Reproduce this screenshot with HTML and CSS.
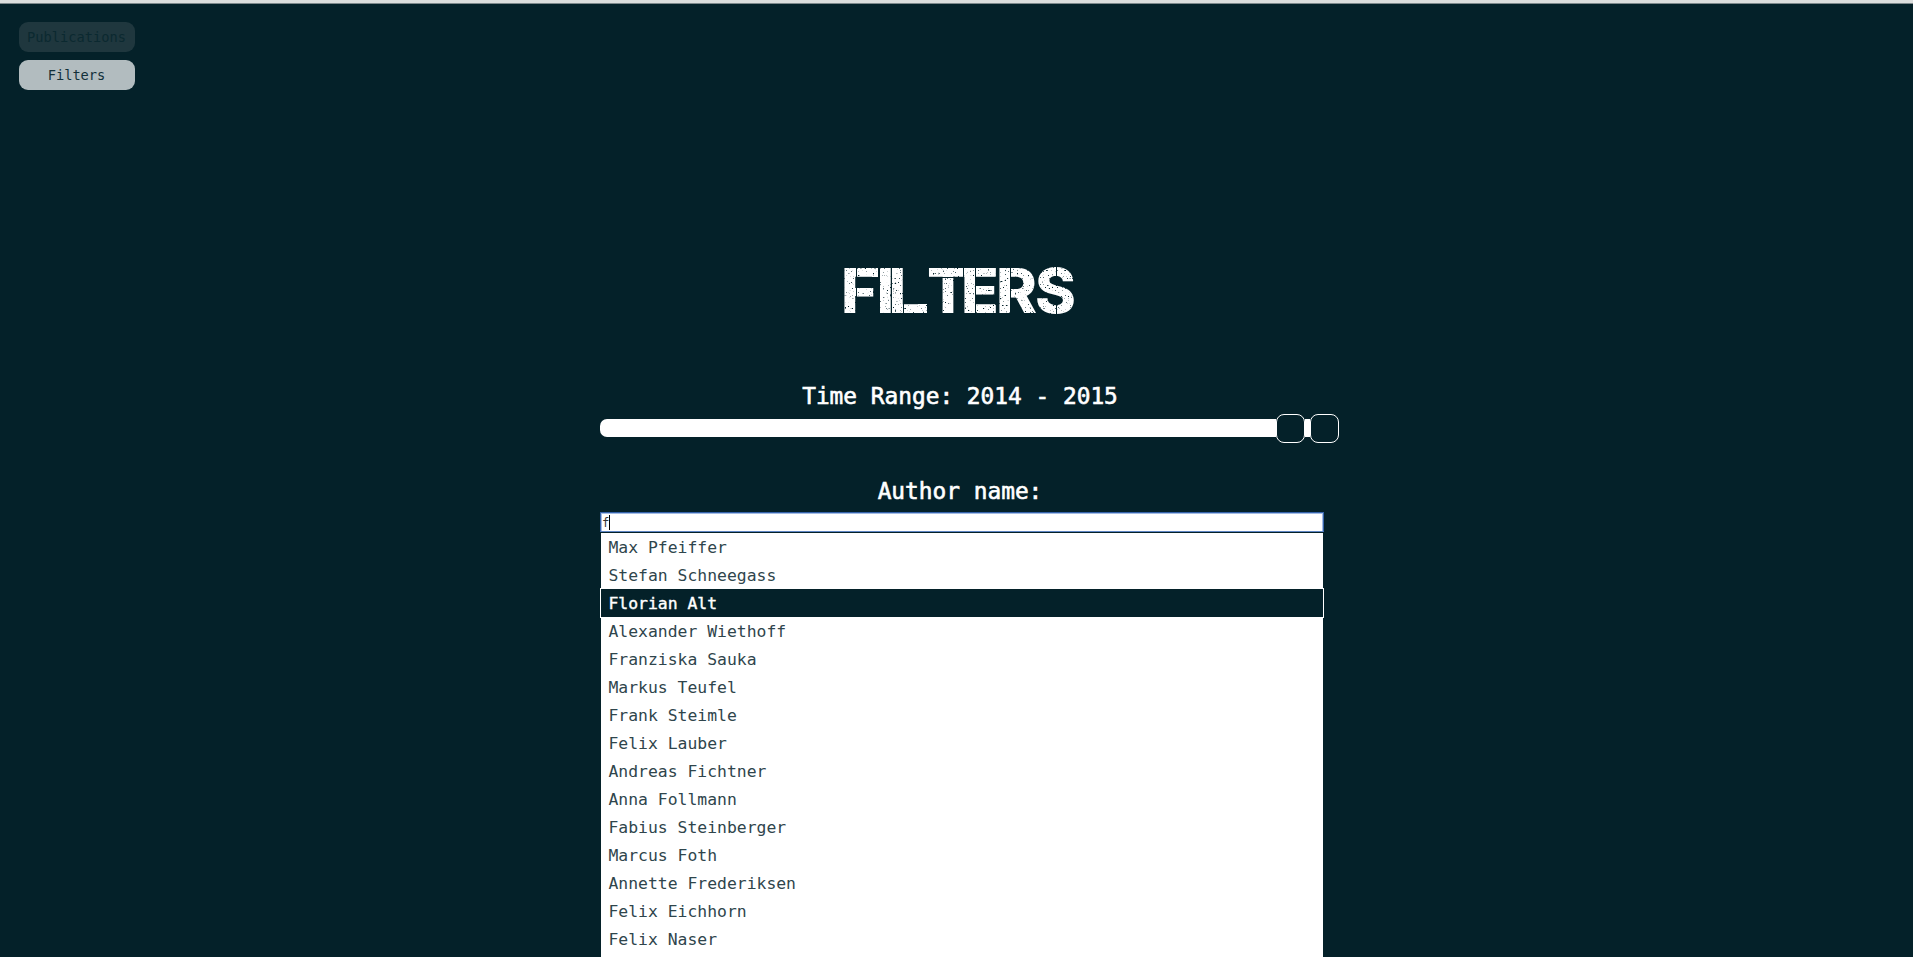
FILE: index.html
```html
<!DOCTYPE html>
<html lang="en">
<head>
<meta charset="utf-8">
<title>Filters</title>
<link rel="stylesheet" href="styles.css">
</head>
<body>
<nav class="menu">
  <button class="menu-item muted">Publications</button>
  <button class="menu-item">Filters</button>
</nav>
<main class="filters">
  <svg class="title" width="260" height="90" viewBox="828 245 260 90" role="heading" aria-level="1">
    <defs>
      <filter id="worn" x="0" y="0" width="1" height="1">
        <feTurbulence type="fractalNoise" baseFrequency="0.6" numOctaves="2" seed="8" result="n"/>
        <feColorMatrix in="n" type="matrix" values="0 0 0 0 0  0 0 0 0 0  0 0 0 0 0  8 0 0 0 -5.3" result="spots"/>
        <feComposite in="SourceGraphic" in2="spots" operator="out"/>
      </filter>
    </defs>
    <g filter="url(#worn)">
      <text class="title-text" y="313" x="841 876.5 888.5 927 961 996 1035">FILTERS</text>
      <path class="worn-edge" d="M918 304h9v9h-9zM872 268h6v9h-6z"/>
    </g>
    <path class="slits" d="M856.5 266v49M891.5 266v49M903.5 303v12M963.5 266v49M975.5 266v49M1010.5 266v49M1056.5 266v14M1056.5 303v12M938 277.5h16"/>
  </svg>
  <h2 class="label">Time Range: 2014 - 2015</h2>
  <div class="slider"><div class="track"></div><i class="handle"></i><i class="joint"></i><i class="handle"></i></div>
  <h2 class="label author">Author name:</h2>
  <div class="field" role="textbox">f<i class="caret"></i></div>
  <ul class="options">
    <li>Max Pfeiffer</li>
    <li>Stefan Schneegass</li>
    <li class="active">Florian Alt</li>
    <li>Alexander Wiethoff</li>
    <li>Franziska Sauka</li>
    <li>Markus Teufel</li>
    <li>Frank Steimle</li>
    <li>Felix Lauber</li>
    <li>Andreas Fichtner</li>
    <li>Anna Follmann</li>
    <li>Fabius Steinberger</li>
    <li>Marcus Foth</li>
    <li>Annette Frederiksen</li>
    <li>Felix Eichhorn</li>
    <li>Felix Naser</li>
  </ul>
</main>
</body>
</html>
```
FILE: styles.css
```css
* { box-sizing: border-box; }
html { height: 100%; overflow: hidden; }
body {
  height: 957px;
  margin: 0;
  overflow: hidden;
  background: #042129;
  border-top: 3px solid #dcdedd;
  box-shadow: inset 0 1px #7d888b;
  color: #fff;
  font-family: Consolas, "DejaVu Sans Mono", monospace;
}
.menu {
  display: flex;
  flex-direction: column;
  gap: 8px;
  width: 116px;
  height: 71px;
  margin: 19px 0 0 19px;
}
.menu-item {
  height: 30px;
  padding: 0 1px 0 0;
  border: 0;
  border-radius: 9px;
  background: #b2bcbf;
  color: #12303a;
  font: 13.7px/30px Consolas, "DejaVu Sans Mono", monospace;
}
.menu-item.muted { background: #1f373e; color: #0b2930; }
.filters { width: 724px; margin: 152px 0 0 600px; }
.title { display: block; margin-left: 228px; }
.title-text { font: 800 62px Inter, sans-serif; fill: #fff; }
.worn-edge { fill: #fff; }
.slits { fill: none; stroke: #042129; stroke-width: 1; }
.label {
  height: 32px;
  margin: 45px 0 0;
  padding-right: 8px;
  text-indent: 4px;
  text-align: center;
  font-size: 22.8px;
  line-height: 32px;
  font-weight: 400;
  white-space: nowrap;
  -webkit-text-stroke: .6px #fff;
}
.slider { display: flex; align-items: center; width: 740px; height: 30px; margin-top: 1px; }
.track {
  width: 676px;
  flex: none;
  height: 18px;
  border-radius: 7px 0 0 7px;
  background: #fff;
}
.joint { width: 5px; height: 18px; flex: none; background: #fff; }
.handle {
  width: 29px;
  height: 29px;
  flex: none;
  border: 1px solid #fff;
  border-radius: 8px;
  background: #042129;
}
.author { margin-top: 32px; }
.field {
  display: flex;
  align-items: center;
  height: 20px;
  margin-top: 5px;
  padding: 1px 0 0 1px;
  border: 1px solid #3563aa;
  border-bottom-color: #5f86c4;
  box-shadow: inset 0 1px #a3bce4, inset 1px 0 #a3bce4, inset -1px 0 #a3bce4;
  background: #fff;
  color: #333;
  font-size: 12.2px;
  line-height: 18px;
}
.caret { width: 1px; height: 15px; background: #000; }
.options {
  margin: 1px 1px 0;
  padding: 0 0 10px;
  list-style: none;
  background: #fff;
  color: #2f454c;
}
.options li {
  height: 28px;
  padding-left: 7.5px;
  font-size: 16.4px;
  line-height: 29px;
}
.options .active {
  position: relative;
  background: #042129;
  color: #fff;
  box-shadow: 0 0 0 1px #fff;
  -webkit-text-stroke: .4px #fff;
}
```
